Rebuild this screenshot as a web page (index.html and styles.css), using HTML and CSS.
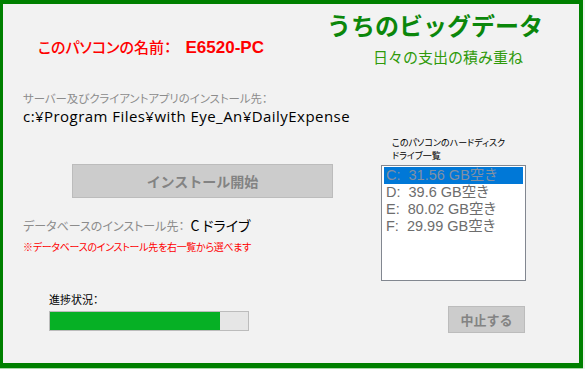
FILE: index.html
```html
<html lang="ja">
<head>
    <meta charset="UTF-8">
    <meta name="viewport" content="width=device-width, initial-scale=1.0">
    <title>うちのビッグデータ - インストール</title>
    <link rel="stylesheet" href="styles.css">
</head>
<body>

    <div class="window">
        <!-- Header: PC name and app title -->
        <div class="top">
            <p class="pc-name">このパソコンの名前：<span class="pc-id">E6520-PC</span></p>
            <div class="brand">
                <h1 class="brand-title">うちのビッグデータ</h1>
                <p class="brand-sub">日々の支出の積み重ね</p>
            </div>
        </div>

        <div class="main">
            <div class="install">
                <p class="label">サーバー及びクライアントアプリのインストール先：</p>
                <p class="path">c:¥Program Files¥with Eye_An¥DailyExpense</p>
                <button class="btn btn-install">インストール開始</button>
                <p class="db-row"><span class="label">データベースのインストール先：</span><span class="db-drive">C ドライブ</span></p>
                <p class="note">※データベースのインストール先を右一覧から選べます</p>
            </div>

            <div class="drives">
                <p class="drives-title">このパソコンのハードディスク<br>ドライブ一覧</p>
                <ul class="drive-list">
                    <li class="selected">C:  31.56 GB空き</li>
                    <li>D:  39.6 GB空き</li>
                    <li>E:  80.02 GB空き</li>
                    <li>F:  29.99 GB空き</li>
                </ul>
            </div>
        </div>

        <div class="bottom">
            <div class="progress-box">
                <p class="progress-label">進捗状況：</p>
                <div class="progress">
                    <div class="progress-fill" style="width: 86%;"></div>
                </div>
            </div>
            <button class="btn btn-stop">中止する</button>
        </div>
    </div>

</body>
</html>
```

FILE: styles.css
```css
/* Global Styles */
body {
    margin: 0;
    width: 585px;
    height: 369px;
    background: #f0f0f0;
    font-family: "Noto Sans CJK JP", sans-serif;
    font-feature-settings: "palt";
    overflow: hidden;
}

p {
    margin: 0;
}

.window {
    box-sizing: border-box;
    width: 583px;
    height: 368px;
    border-style: solid;
    border-color: #008000;
    border-width: 4px 4px 5px 3px;
    background: #f2f2f2;
    box-shadow: 0 1px 0 #a8d8a8;
    display: flex;
    flex-direction: column;
}

/* Header */
.top {
    display: flex;
    justify-content: space-between;
    align-items: flex-start;
}

.pc-name {
    margin: 33px 0 0 35px;
    color: #ff0000;
    font-size: 15px;
    line-height: 20px;
    font-weight: 500;
}

.pc-id {
    margin-left: 14px;
    font-family: "Liberation Sans", sans-serif;
    font-size: 17px;
    font-weight: bold;
}

.brand {
    margin: 7px 36px 0 0;
    display: flex;
    flex-direction: column;
}

.brand-title {
    margin: 0;
    color: #0b870b;
    font-size: 24px;
    line-height: 28px;
    font-weight: bold;
    font-feature-settings: normal;
}

.brand-sub {
    margin: 9px 0 0 46px;
    color: #2f9a0a;
    font-size: 15px;
    line-height: 18px;
    font-feature-settings: normal;
}

/* Main area */
.main {
    display: grid;
    grid-template-columns: 1fr 145px;
    column-gap: 20px;
    padding: 0 53px 0 20px;
}

.label {
    color: #8c8c8c;
    font-size: 11.4px;
    line-height: 16px;
}

.install > .label {
    margin-top: 24px;
}

.path {
    font-family: "Open Sans", "Noto Sans CJK JP", sans-serif;
    font-size: 15px;
    letter-spacing: 0.45px;
    line-height: 20px;
    color: #000;
    white-space: nowrap;
}

.btn {
    display: block;
    background: #cccccc;
    border: 1px solid #bcbcbc;
    color: #838383;
    font-family: "Noto Sans CJK JP", sans-serif;
    font-weight: bold;
    padding: 0;
}

.btn-install {
    margin: 38px 0 0 49px;
    width: 261px;
    height: 34px;
    font-size: 14px;
}

.db-row {
    margin-top: 18px;
    display: flex;
    align-items: baseline;
    line-height: 18px;
}

.db-row .label {
    font-size: 12px;
}

.db-drive {
    margin-left: 6px;
    font-size: 14px;
    color: #000;
}

.note {
    margin-top: 6px;
    color: #ff0000;
    font-size: 10px;
    letter-spacing: -0.3px;
    line-height: 14px;
}

/* Drive list */
.drives {
    padding-top: 70px;
}

.drives-title {
    margin-left: 11px;
    font-size: 9px;
    line-height: 13px;
    color: #000;
}

.drive-list {
    list-style: none;
    margin: 3px 0 0;
    padding: 1px 2px 0;
    height: 116px;
    box-sizing: border-box;
    border: 1px solid #828790;
    background: #fff;
}

.drive-list li {
    height: 17px;
    line-height: 17px;
    padding-left: 2px;
    font-family: "Liberation Sans", "Noto Sans CJK JP", sans-serif;
    font-size: 14.5px;
    color: #6d6d6d;
    white-space: pre;
}

.drive-list .selected {
    background: #0078d7;
    color: #8090a4;
}

/* Progress and stop */
.bottom {
    margin-top: 2px;
    display: flex;
    justify-content: space-between;
    align-items: flex-start;
    padding: 0 54px 0 46px;
}

.progress-label {
    margin-top: 9px;
    font-size: 11px;
    line-height: 14px;
    color: #000;
}

.progress {
    margin-top: 5px;
    width: 198px;
    height: 18px;
    border: 1px solid #bcbcbc;
    background: #e6e6e6;
}

.progress-fill {
    height: 100%;
    background: #06b025;
}

.btn-stop {
    margin-top: 23px;
    width: 77px;
    height: 27px;
    font-size: 13px;
}
```
